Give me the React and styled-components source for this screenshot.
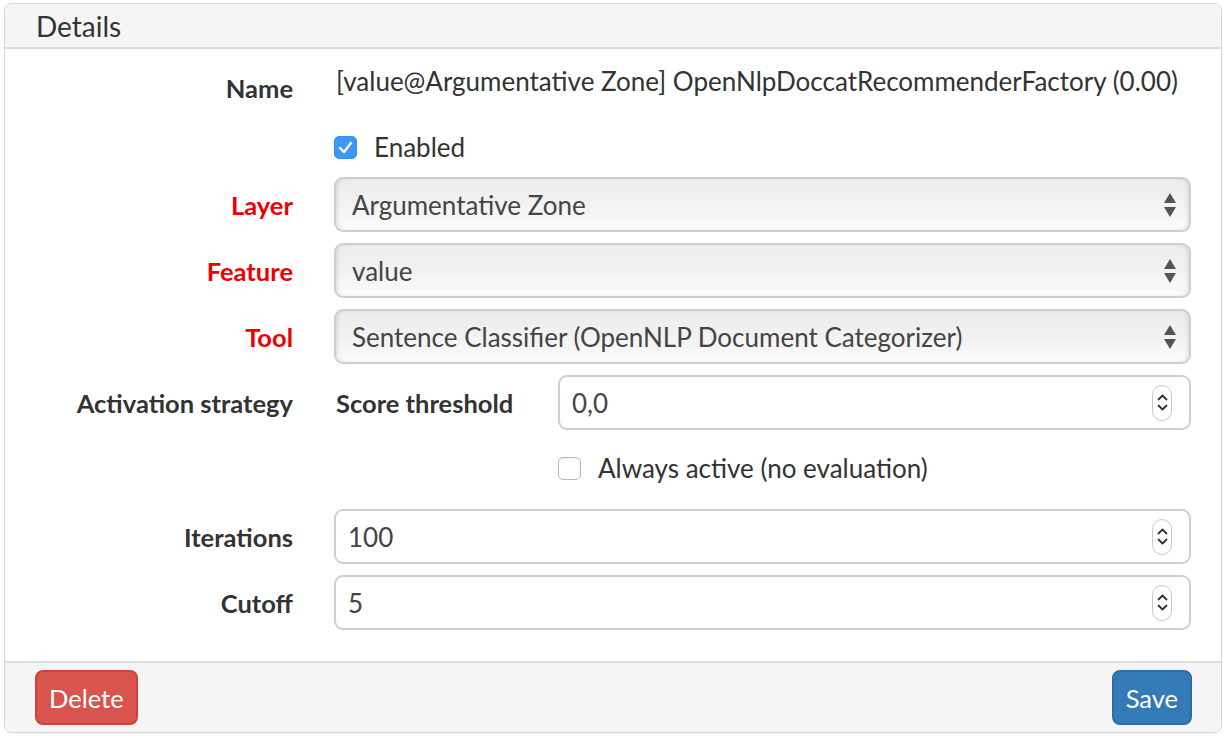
import React from "react";
import styled, { createGlobalStyle } from "styled-components";

const Global = createGlobalStyle`
  html, body { margin: 0; padding: 0; background: #fff; }
  body { font-family: Lato, "Open Sans", "Liberation Sans", sans-serif; color: #333; }
  * { box-sizing: border-box; }
`;

const Panel = styled.div`
  margin: 3px 4px;
  border: 1px solid #d6d6d6;
  border-radius: 8px;
  box-shadow: 0 1px 1px rgba(0,0,0,0.05);
  overflow: hidden;
  background: #fff;
`;

const Heading = styled.div`
  height: 45px;
  background: #f5f5f5;
  border-bottom: 2px solid #ddd;
  padding-left: 31px;
  display: flex;
  align-items: center;
  font-size: 28px;
  color: #333;
`;

const Body = styled.div`
  padding: 15px 30px 31px 0;
`;

const Group = styled.div`
  display: grid;
  grid-template-columns: 288px 1fr;
  column-gap: 41px;
  align-items: ${p => (p.$top ? "start" : "center")};
  margin-bottom: ${p => p.$mb}px;
  &:last-child { margin-bottom: 0; }
`;

const Label = styled.div`
  text-align: right;
  font-weight: 700;
  font-size: 25.5px;
  color: ${p => (p.$required ? "#ee0000" : "#333")};
  padding-top: ${p => p.$pt || 0}px;
  line-height: 34px;
`;

const Static = styled.div`
  font-size: 26px;
  line-height: 34px;
  color: #333;
  padding-left: 2px;
`;

const CheckRow = styled.label`
  display: flex;
  align-items: center;
  gap: 17px;
  height: 34px;
  font-size: 26px;
  color: #333;
  padding-left: ${p => p.$indent || 0}px;
`;

const Box = styled.span`
  width: 23px;
  height: 23px;
  border-radius: 5px;
  display: inline-flex;
  align-items: center;
  justify-content: center;
  background: ${p => (p.$checked ? "#3d97f5" : "#fff")};
  border: ${p => (p.$checked ? "1px solid #3a8eea" : "1.5px solid #b8b8b8")};
  box-shadow: ${p => (p.$checked ? "none" : "inset 0 1px 1px rgba(0,0,0,0.06)")};
`;

const Select = styled.div`
  height: 55px;
  border: 2px solid #cfcfcf;
  border-radius: 9px;
  background: linear-gradient(to bottom, #ececec 0%, #f2f2f2 50%, #fbfbfb 100%);
  box-shadow: inset 3px 0 4px -2px rgba(0,0,0,0.12), inset -3px 0 4px -2px rgba(0,0,0,0.12);
  display: flex;
  align-items: center;
  justify-content: space-between;
  padding: 0 12px 0 16px;
  font-size: 26px;
  color: #444;
`;

const Arrows = styled.svg`
  width: 14px;
  height: 28px;
`;

const NumberInput = styled.div`
  height: 55px;
  border: 2px solid #cfcfcf;
  border-radius: 9px;
  background: #fff;
  display: flex;
  align-items: center;
  justify-content: space-between;
  padding: 0 17px 0 12px;
  font-size: 26px;
  color: #444;
`;

const Spinner = styled.span`
  width: 20px;
  height: 36px;
  border: 1.5px solid #c8c8c8;
  border-radius: 10px;
  display: inline-flex;
  flex-direction: column;
  align-items: center;
  justify-content: center;
  gap: 3px;
`;

const Split = styled.div`
  display: grid;
  grid-template-columns: 224px 1fr;
  align-items: center;
`;

const SubLabel = styled.div`
  font-weight: 700;
  font-size: 25.5px;
  color: #333;
  padding-left: 2px;
`;

const Footer = styled.div`
  background: #f5f5f5;
  border-top: 2px solid #ddd;
  padding: 7px 29px 7px 30px;
  display: flex;
  justify-content: space-between;
`;

const Button = styled.button`
  height: 55px;
  padding: 0 ${p => p.$px}px;
  border-radius: 8px;
  font-family: inherit;
  font-size: 25.5px;
  color: #fff;
  background: ${p => (p.$variant === "danger" ? "#d9534f" : "#337ab7")};
  border: 2px solid ${p => (p.$variant === "danger" ? "#d43f3a" : "#2e6da4")};
`;

const Check = () => (
  <svg width="15" height="13" viewBox="0 0 15 13">
    <path d="M2 7 L6 11 L13 2" fill="none" stroke="#fff" strokeWidth="2.4" strokeLinecap="round" strokeLinejoin="round" />
  </svg>
);

const SelectArrows = () => (
  <Arrows viewBox="0 0 14 28">
    <path d="M1 12 L7 2 L13 12 Z" fill="#555" />
    <path d="M1 16 L13 16 L7 26 Z" fill="#555" />
  </Arrows>
);

const Spin = () => (
  <Spinner>
    <svg width="11" height="7" viewBox="0 0 11 7">
      <path d="M1.5 5.5 L5.5 1.5 L9.5 5.5" fill="none" stroke="#333" strokeWidth="1.8" strokeLinecap="round" strokeLinejoin="round" />
    </svg>
    <svg width="11" height="7" viewBox="0 0 11 7">
      <path d="M1.5 1.5 L5.5 5.5 L9.5 1.5" fill="none" stroke="#333" strokeWidth="1.8" strokeLinecap="round" strokeLinejoin="round" />
    </svg>
  </Spinner>
);

export default function App() {
  return (
    <>
      <Global />
      <Panel>
        <Heading>Details</Heading>
        <Body>
          <Group $top $mb={25}>
            <Label $pt={7}>Name</Label>
            <Static>[value@Argumentative Zone] OpenNlpDoccatRecommenderFactory (0.00)</Static>
          </Group>
          <Group $mb={13}>
            <div />
            <CheckRow>
              <Box $checked><Check /></Box>
              Enabled
            </CheckRow>
          </Group>
          <Group $mb={11}>
            <Label $required>Layer</Label>
            <Select>Argumentative Zone<SelectArrows /></Select>
          </Group>
          <Group $mb={11}>
            <Label $required>Feature</Label>
            <Select>value<SelectArrows /></Select>
          </Group>
          <Group $mb={11}>
            <Label $required>Tool</Label>
            <Select>Sentence Classifier (OpenNLP Document Categorizer)<SelectArrows /></Select>
          </Group>
          <Group $mb={21}>
            <Label>Activation strategy</Label>
            <Split>
              <SubLabel>Score threshold</SubLabel>
              <NumberInput>0,0<Spin /></NumberInput>
            </Split>
          </Group>
          <Group $mb={24}>
            <div />
            <CheckRow $indent={224}>
              <Box />
              Always active (no evaluation)
            </CheckRow>
          </Group>
          <Group $mb={11}>
            <Label>Iterations</Label>
            <NumberInput>100<Spin /></NumberInput>
          </Group>
          <Group $mb={0}>
            <Label>Cutoff</Label>
            <NumberInput>5<Spin /></NumberInput>
          </Group>
        </Body>
        <Footer>
          <Button $variant="danger" $px={12}>Delete</Button>
          <Button $variant="primary" $px={12}>Save</Button>
        </Footer>
      </Panel>
    </>
  );
}
